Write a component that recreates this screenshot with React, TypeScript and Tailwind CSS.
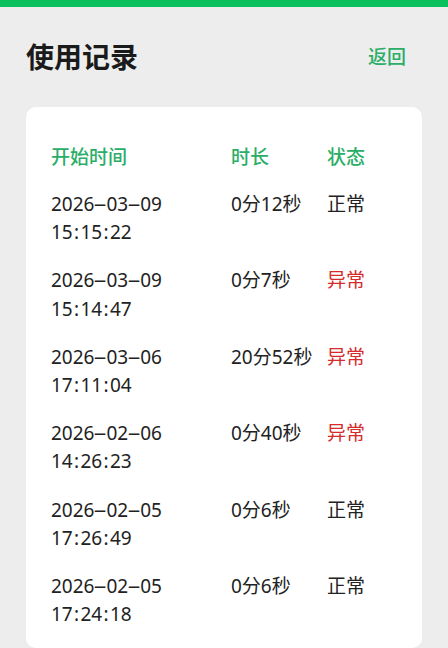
import React from "react";

const rows = [
  { d: "2026-03-09", t: "15:15:22", dur: "0分12秒", ok: true },
  { d: "2026-03-09", t: "15:14:47", dur: "0分7秒", ok: false },
  { d: "2026-03-06", t: "17:11:04", dur: "20分52秒", ok: false },
  { d: "2026-02-06", t: "14:26:23", dur: "0分40秒", ok: false },
  { d: "2026-02-05", t: "17:26:49", dur: "0分6秒", ok: true },
  { d: "2026-02-05", t: "17:24:18", dur: "0分6秒", ok: true },
];

function Spaced({ text, sep, cls }: { text: string; sep: string; cls: string }) {
  const parts = text.split(sep);
  return (
    <span>
      {parts.map((p, i) => (
        <React.Fragment key={i}>
          {i > 0 && <span className={cls}>{sep}</span>}
          {p}
        </React.Fragment>
      ))}
    </span>
  );
}

export default function App() {
  return (
    <div
      className="w-[448px] h-[648px] overflow-hidden bg-[#ededed] flex flex-col"
      style={{ fontFamily: '"Noto Sans", "Noto Sans CJK SC", sans-serif' }}
    >
      <div className="h-[7px] bg-[#0ac05d] shrink-0" />
      <div className="flex items-center justify-between pl-[26px] pr-[42px] h-[100px] shrink-0">
        <div className="text-[28px] font-bold text-[#1a1a1a] leading-none">使用记录</div>
        <div className="text-[19px] font-medium text-[#2aae67] leading-none">返回</div>
      </div>
      <div className="ml-[26px] mr-[26px] bg-white rounded-[10px] pt-[36px] pl-[25px] pr-[20px] flex flex-col gap-[19px] grow">
        <div className="grid grid-cols-[180px_96px_1fr] text-[19px] leading-[28px] font-medium text-[#2aae67]">
          <div>开始时间</div>
          <div>时长</div>
          <div>状态</div>
        </div>
        <div className="flex flex-col gap-[20px]">
          {rows.map((r, i) => (
            <div
              key={i}
              className="grid grid-cols-[180px_96px_1fr] text-[19px] leading-[28.2px] text-[#222222]"
            >
              <div className="flex flex-col">
                <Spaced text={r.d} sep="-" cls="inline-block w-[12px] text-center scale-x-[2.3]" />
                <Spaced text={r.t} sep=":" cls="mx-[1.3px]" />
              </div>
              <div>{r.dur}</div>
              <div className={r.ok ? "text-[#222222]" : "text-[#d42b2b]"}>
                {r.ok ? "正常" : "异常"}
              </div>
            </div>
          ))}
        </div>
      </div>
    </div>
  );
}
